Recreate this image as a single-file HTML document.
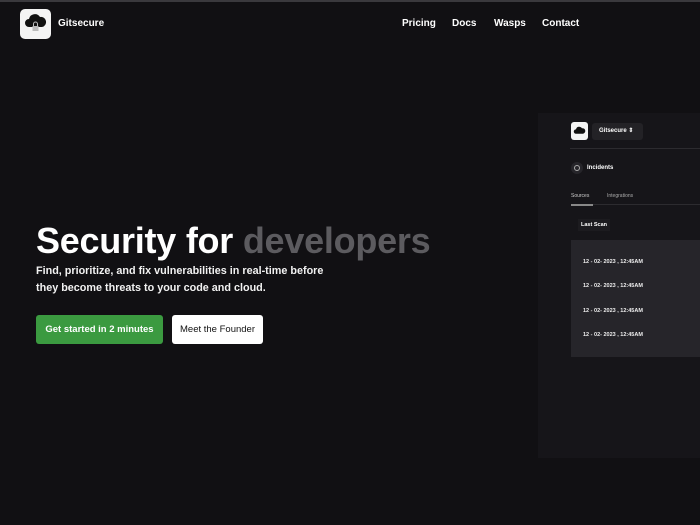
<!DOCTYPE html>
<html><head><style>
*{margin:0;padding:0;box-sizing:border-box}
body{width:700px;height:525px;background:#111013;font-family:"Liberation Sans",sans-serif;color:#fff;position:relative;overflow:hidden}
.a{position:absolute}
nav a{position:absolute;top:18px;font-size:10px;font-weight:bold;color:#fff;text-decoration:none}
.row{position:absolute;left:583px;font-size:5.5px;font-weight:bold;color:#eee}
</style></head><body>
<div class="a" style="left:0;top:0;width:700px;height:2px;background:#3a393d"></div>
<div class="a" style="left:20px;top:9px;width:31px;height:30px;background:#f4f4f4;border-radius:5px"></div>
<svg class="a" style="left:24px;top:13px" width="23" height="22" viewBox="0 0 23 22">
<path d="M5 14 a4 4 0 0 1 0-8 a6 6 0 0 1 11-2 a4.5 4.5 0 0 1 2 10z" fill="#111"/>
<rect x="8.5" y="13" width="6" height="5" fill="#bbb"/><path d="M9.5 13 v-2 a2 2 0 0 1 4 0 v2" stroke="#bbb" fill="none" stroke-width="1"/>
</svg>
<div class="a" style="left:58px;top:18px;font-size:10px;font-weight:bold">Gitsecure</div>
<nav><a style="left:402px">Pricing</a><a style="left:452px">Docs</a><a style="left:494px">Wasps</a><a style="left:542px">Contact</a></nav>
<div class="a" style="left:36px;top:220px;font-size:36px;font-weight:bold;letter-spacing:-0.25px;white-space:nowrap">Security for <span style="color:#5c5b5f">developers</span></div>
<div class="a" style="left:36px;top:263px;font-size:10.8px;line-height:17px;font-weight:bold;color:#f2f2f2">Find, prioritize, and fix vulnerabilities in real-time before<br>they become threats to your code and cloud.</div>
<div class="a" style="left:36px;top:315px;width:127px;height:29px;background:#3b9a40;border-radius:3px;font-size:9.5px;font-weight:bold;text-align:center;line-height:29px">Get started in 2 minutes</div>
<div class="a" style="left:172px;top:315px;width:91px;height:29px;background:#fff;border-radius:3px;font-size:9.5px;color:#111;text-align:center;line-height:29px">Meet the Founder</div>
<div class="a" style="left:538px;top:113px;width:162px;height:345px;background:#161519"></div>
<div class="a" style="left:571px;top:122px;width:17px;height:18px;background:#f4f4f4;border-radius:3px"></div>
<svg class="a" style="left:573px;top:125px" width="13" height="12" viewBox="0 0 23 22"><path d="M5 16 a4 4 0 0 1 0-8 a6 6 0 0 1 11-2 a4.5 4.5 0 0 1 2 10z" fill="#111"/></svg>
<div class="a" style="left:592px;top:123px;width:51px;height:17px;background:#232226;border-radius:3px;font-size:6px;font-weight:bold;line-height:17px;padding-left:7px">Gitsecure ⇕</div>
<div class="a" style="left:570px;top:148px;width:130px;height:1px;background:#2c2b2f"></div>
<div class="a" style="left:571px;top:162px;width:12px;height:12px;border-radius:6px;background:#26252a"></div>
<div class="a" style="left:574px;top:165px;width:6px;height:6px;border-radius:3px;border:1px solid #aaa"></div>
<div class="a" style="left:587px;top:165px;font-size:6px;font-weight:bold">Incidents</div>
<div class="a" style="left:571px;top:193px;font-size:5px;color:#ccc">Sources</div>
<div class="a" style="left:607px;top:193px;font-size:5px;color:#aaa">Integrations</div>
<div class="a" style="left:571px;top:204px;width:129px;height:1px;background:#2c2b2f"></div>
<div class="a" style="left:571px;top:204px;width:22px;height:1.5px;background:#888"></div>
<div class="a" style="left:578px;top:219px;width:32px;height:12px;background:#1c1b1f;font-size:5.5px;font-weight:bold;text-align:center;line-height:12px">Last Scan</div>
<div class="a" style="left:571px;top:240px;width:129px;height:117px;background:#26252a"></div>
<div class="row" style="top:259px">12 - 02- 2023 , 12:45AM</div>
<div class="row" style="top:283px">12 - 02- 2023 , 12:45AM</div>
<div class="row" style="top:308px">12 - 02- 2023 , 12:45AM</div>
<div class="row" style="top:332px">12 - 02- 2023 , 12:45AM</div>
</body></html>
